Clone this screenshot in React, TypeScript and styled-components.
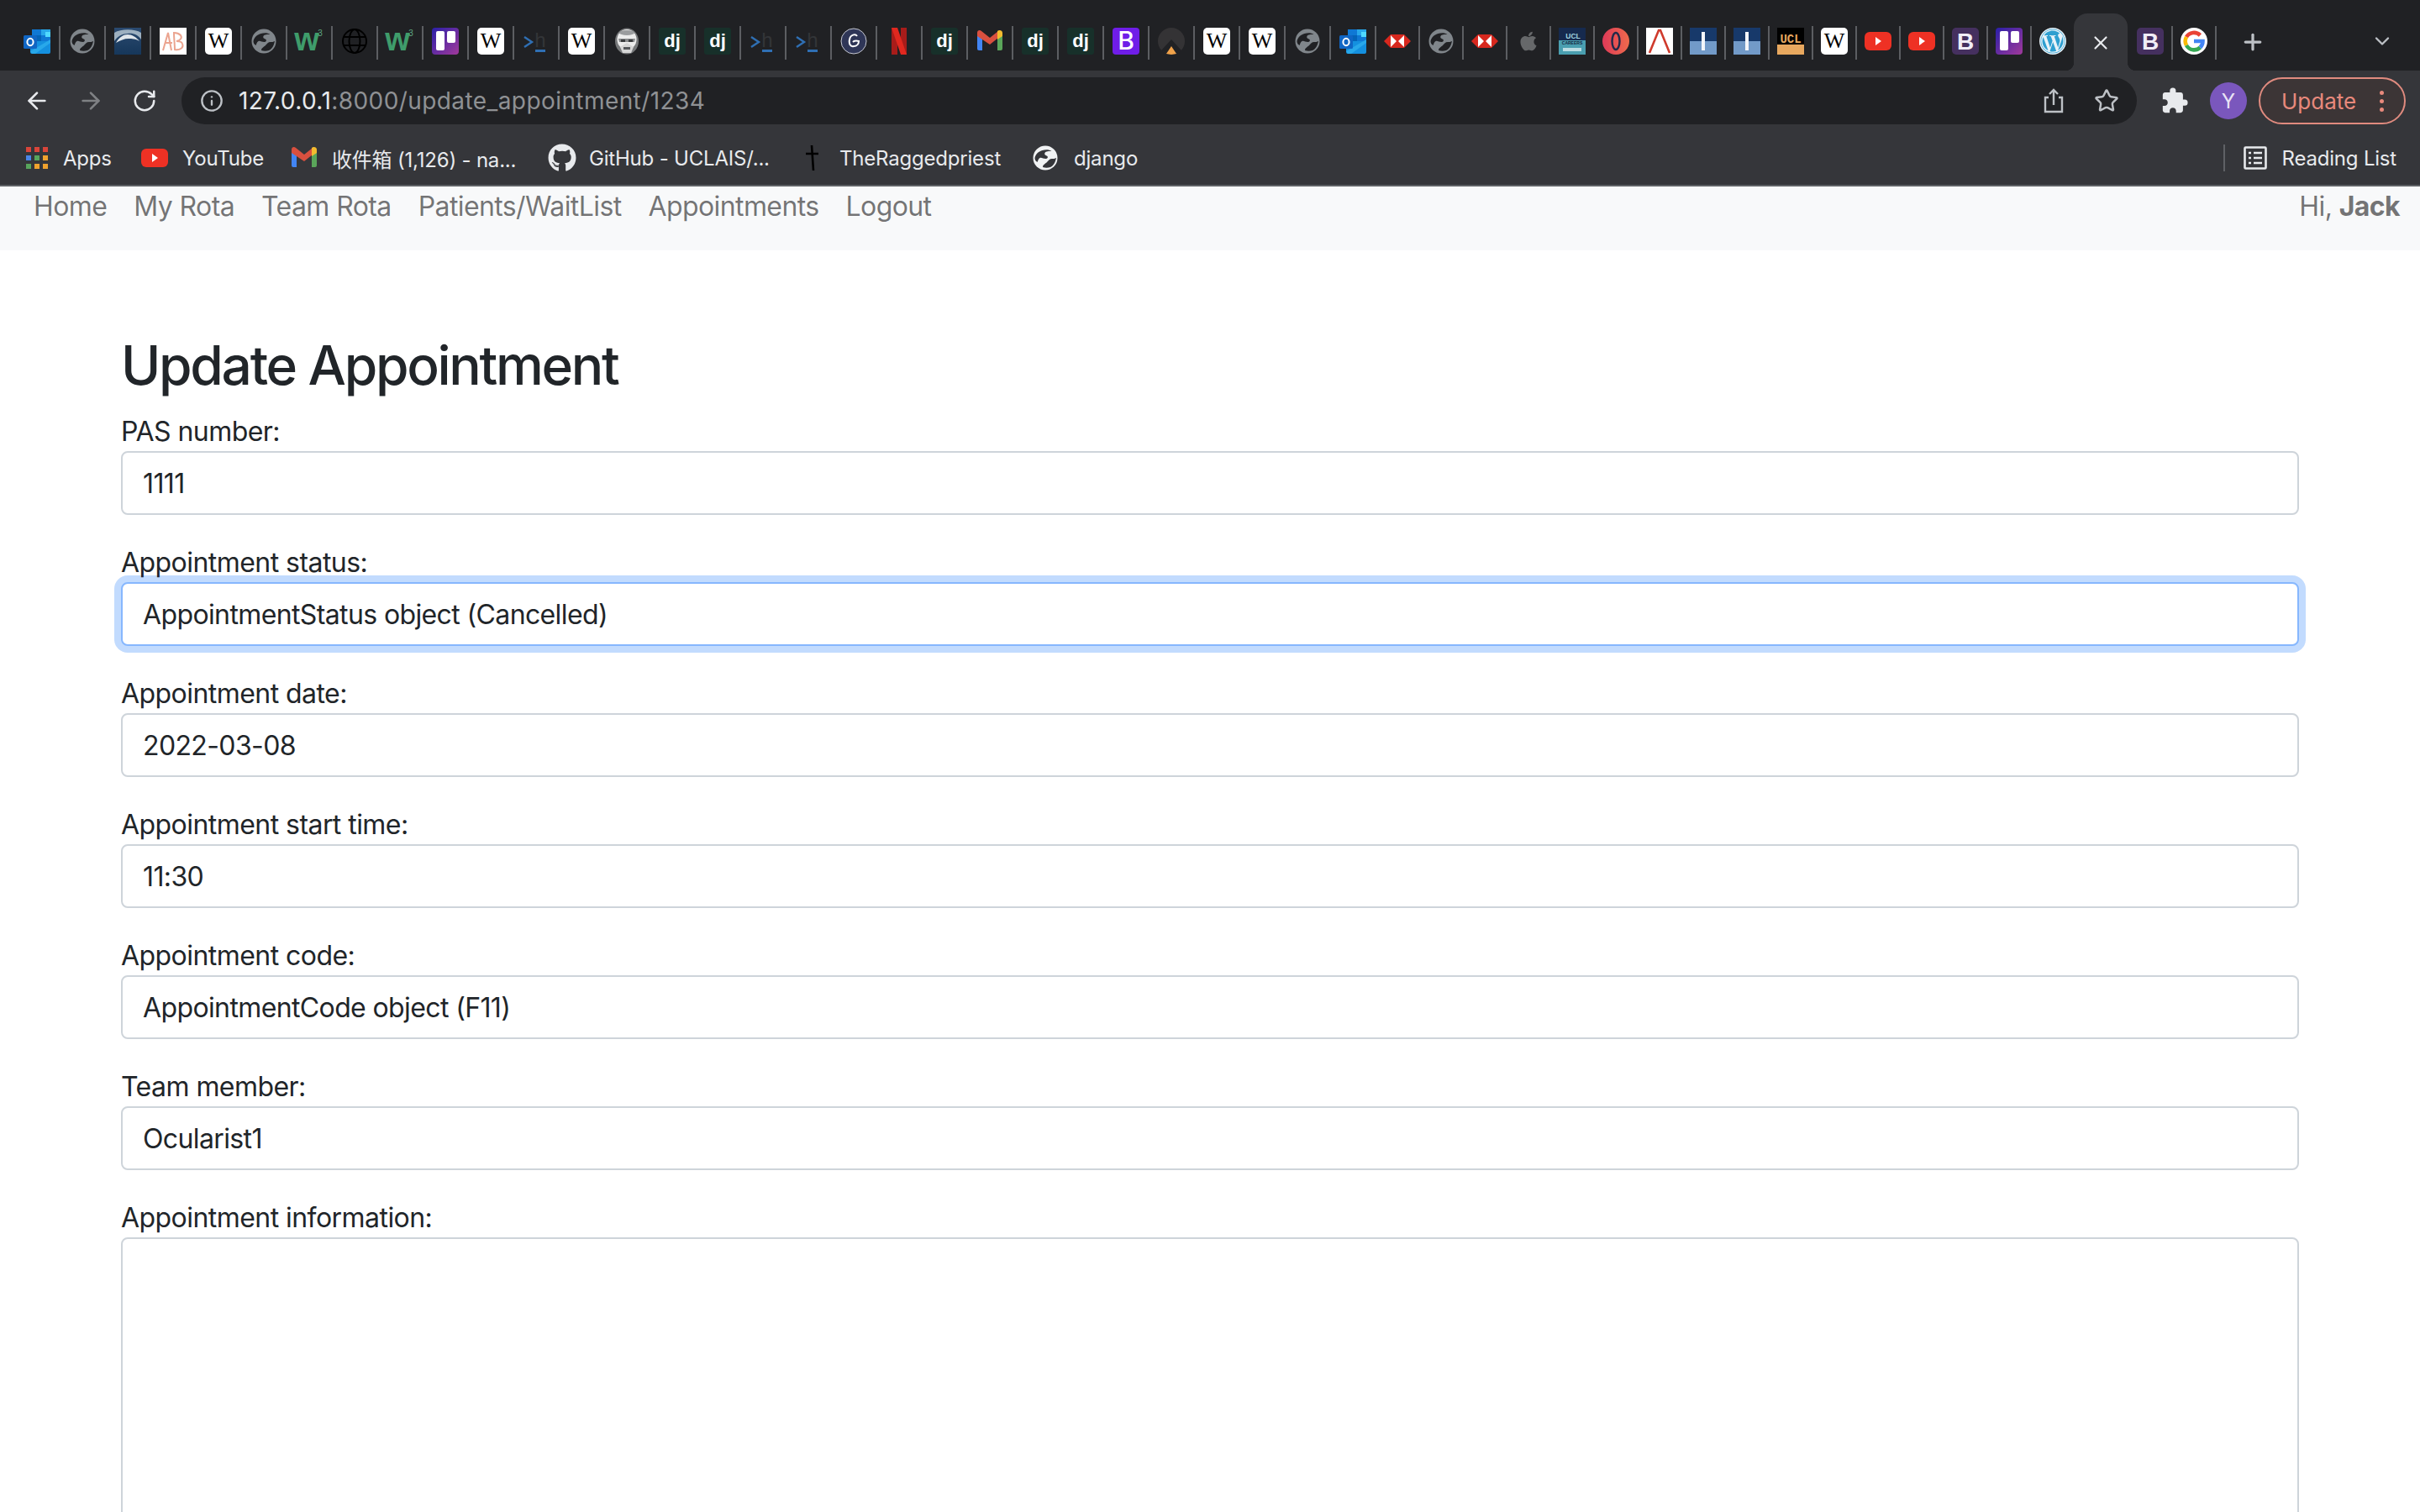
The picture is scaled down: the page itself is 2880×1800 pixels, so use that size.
import React from "react";
import styled, { createGlobalStyle } from "styled-components";
import { ArrowLeft, ArrowRight, ChevronDown, Info, Plus, RotateCw, Star, X } from "lucide-react";
import { FaApple, FaGithub, FaWordpress } from "react-icons/fa";
import { MdExtension } from "react-icons/md";

const GlobalStyle = createGlobalStyle`
	html, body {
		margin: 0;
		height: 100%;
		overflow: hidden;
		background: #fff;
		font-family: Inter, "Noto Sans CJK SC", sans-serif;
	}
`;

/* browser chrome */
const TabStrip = styled.div`
	display: flex;
	align-items: flex-start;
	height: 84px;
	padding: 16px 0 0 18px;
	box-sizing: border-box;
	background: #202124;
`;

const Tab = styled.div<{ $wide?: boolean; $noSep?: boolean }>`
	position: relative;
	flex: none;
	display: flex;
	justify-content: center;
	box-sizing: border-box;
	width: ${(p) => (p.$wide ? 54 : 52)}px;
	height: 68px;
	padding: 17px 2px 0 0;
	&::after {
		content: "";
		display: ${(p) => (p.$noSep ? "none" : "block")};
		position: absolute;
		top: 15px;
		right: 0;
		width: 2px;
		height: 40px;
		background: #5c5e62;
	}
`;

const ActiveTab = styled.div`
	position: relative;
	flex: none;
	display: flex;
	justify-content: center;
	width: 64px;
	height: 68px;
	padding-top: 22px;
	box-sizing: border-box;
	margin-left: -2px;
	margin-right: 2px;
	border-radius: 16px 16px 0 0;
	background: #35363a;
	color: #e8eaed;
	&::before,
	&::after {
		content: "";
		position: absolute;
		bottom: 0;
		width: 10px;
		height: 10px;
	}
	&::before {
		left: -10px;
		background: radial-gradient(circle at 0 0, transparent 10px, #35363a 10.5px);
	}
	&::after {
		right: -10px;
		background: radial-gradient(circle at 100% 0, transparent 10px, #35363a 10.5px);
	}
`;

const StripButton = styled.div<{ $left: number }>`
	flex: none;
	display: flex;
	margin-left: ${(p) => p.$left}px;
	padding-top: 19px;
	color: #bdc1c6;
`;

const Toolbar = styled.div`
	display: flex;
	align-items: center;
	height: 64px;
	padding: 8px 17px 0 12px;
	box-sizing: border-box;
	background: #35363a;
`;

const NavButton = styled.div<{ $off?: boolean }>`
	flex: none;
	display: flex;
	justify-content: center;
	width: 64px;
	color: ${(p) => (p.$off ? "#7f8184" : "#e8eaed")};
`;

const Omnibox = styled.div`
	flex: 1;
	display: flex;
	align-items: center;
	height: 56px;
	margin: 0 13px 0 12px;
	padding: 0 21px 0 22px;
	border-radius: 28px;
	background: #202124;
	color: #bdc1c6;
`;

const UrlText = styled.div`
	flex: 1;
	margin-left: 18px;
	font-size: 28px;
	letter-spacing: 0.42px;
	white-space: nowrap;
	color: #8f9194;
`;

const UrlHost = styled.span`
	color: #e8eaed;
`;

const OmniAction = styled.div`
	display: flex;
	margin-left: 36px;
`;

const Avatar = styled.div`
	flex: none;
	display: flex;
	align-items: center;
	justify-content: center;
	width: 44px;
	height: 44px;
	margin: 0 14px 0 10px;
	border-radius: 50%;
	background: #7a57bd;
	color: #e9e3f5;
	font-size: 24px;
`;

const UpdatePill = styled.div`
	flex: none;
	display: flex;
	align-items: center;
	justify-content: space-between;
	box-sizing: border-box;
	width: 175px;
	height: 56px;
	padding: 0 24px 0 25px;
	border: 2px solid #e08b7f;
	border-radius: 28px;
	background: #3c3536;
	color: #e8897c;
	font-size: 26px;
`;

const MenuDots = styled.div`
	display: flex;
	flex-direction: column;
	gap: 5px;
	& > i {
		width: 5px;
		height: 5px;
		border-radius: 50%;
		background: #e8897c;
	}
`;

const BookmarkBar = styled.div`
	display: flex;
	align-items: center;
	height: 72px;
	padding: 8px 28px 0 31px;
	box-sizing: border-box;
	background: #35363a;
`;

const Bookmark = styled.div<{ $width?: number; $gap?: number }>`
	flex: none;
	display: flex;
	align-items: center;
	gap: ${(p) => p.$gap ?? 18}px;
	width: ${(p) => (p.$width ? `${p.$width}px` : "auto")};
	color: #e8eaed;
	font-size: 24px;
	letter-spacing: -0.2px;
	white-space: nowrap;
`;

const BarDivider = styled.div`
	width: 2px;
	height: 32px;
	margin: 0 22px 0 auto;
	background: #5f6165;
`;

const ChromeEdge = styled.div`
	height: 2px;
	background: #5f6165;
`;

/* page */
const PageNav = styled.nav`
	display: flex;
	align-items: flex-start;
	height: 76px;
	padding: 0 24px;
	box-sizing: border-box;
	background: #f8f9fa;
	color: rgba(0, 0, 0, 0.55);
	font-size: 32px;
	letter-spacing: -0.6px;
	line-height: 48px;
`;

const NavLink = styled.a`
	padding: 0 16px;
	white-space: nowrap;
`;

const Greeting = styled.div`
	margin-left: auto;
	& > b {
		font-weight: 700;
	}
`;

const Container = styled.main`
	padding: 98px 144px 0;
	color: #212529;
`;

const Title = styled.h2`
	margin: 0 0 16px;
	font-size: 64px;
	font-weight: 500;
	letter-spacing: -2.3px;
	line-height: 77px;
`;

const Field = styled.div`
	margin-bottom: 32px;
`;

const Label = styled.label`
	display: block;
	padding-top: 2px;
	font-size: 32px;
	letter-spacing: -0.55px;
	line-height: 46px;
`;

const TextInput = styled.input<{ $focused?: boolean }>`
	display: block;
	box-sizing: border-box;
	width: 100%;
	height: 76px;
	padding: 12px 24px;
	border: 2px solid ${(p) => (p.$focused ? "#86b7fe" : "#ced4da")};
	border-radius: 8px;
	outline: 0;
	background: #fff;
	box-shadow: ${(p) => (p.$focused ? "0 0 0 8px rgba(13, 110, 253, 0.25)" : "none")};
	color: #212529;
	font: inherit;
	font-size: 32px;
	letter-spacing: -0.62px;
`;

const TextArea = styled.textarea`
	display: block;
	box-sizing: border-box;
	width: 100%;
	height: 420px;
	border: 2px solid #ced4da;
	border-radius: 8px;
	outline: 0;
	resize: none;
`;

const FaviconBox = styled.svg`
	flex: none;
	overflow: visible;
`;

const word = (x: number, y: number, size: number, fill: string, text: string, family = "Liberation Sans", weight = 700) => (
  <text x={x} y={y} fontSize={size} fill={fill} fontFamily={family} fontWeight={weight} textAnchor="middle">
    {text}
  </text>
);

const globeArt = (disc: string, cut: string) => (
  <>
    <circle cx="16" cy="16" r="14.5" fill={disc} />
    <path d="M3.5 16c1-5 5-8 9-9 4-1 8-1 11 1-3 0-7 0-8 2-1 2 1 3 3 4 1 1 0 3-2 3-3 0-5-2-7-1-2 1-2 3-3 5-2-1-3-3-3-5z" fill={cut} />
    <path d="M13 27c0-3 3-4 5-6s3-4 6-4c2 0 3 0 5-1-1 5-3 9-7 11-3 1-6 1-9 0z" fill={cut} />
  </>
);

const favicons: Record<string, React.ReactNode> = {
  outlook: (
    <>
      <rect x="10" y="2" width="22" height="14" fill="#0f78d4" />
      <rect x="21" y="2" width="11" height="7" fill="#28a8ea" />
      <rect x="26" y="5" width="6" height="6" fill="#50d9ff" />
      <rect x="10" y="9" width="11" height="7" fill="#0364b8" />
      <path d="M8 16h24v13a2 2 0 0 1-2 2H10a2 2 0 0 1-2-2z" fill="#1490df" />
      <path d="M8 28l24-14v4L14 31H10z" fill="#28a8ea" />
      <rect x="0" y="9" width="16" height="16" rx="1.5" fill="#1066c4" />
      <ellipse cx="8" cy="17" rx="3.6" ry="4.2" fill="none" stroke="#fff" strokeWidth="2" />
    </>
  ),
  globe: globeArt("#80868b", "#202124"),
  globeWhite: globeArt("#f1f3f4", "#35363a"),
  photo: (
    <>
      <defs>
        <linearGradient id="photoSky" x1="0" y1="0" x2="0" y2="1">
          <stop offset="0" stopColor="#2b4a70" />
          <stop offset="1" stopColor="#16375a" />
        </linearGradient>
      </defs>
      <rect width="32" height="32" fill="url(#photoSky)" />
      <path d="M0 6c8-5 24-5 32 0v8C28 8 22 6 16 7 10 7 4 10 0 16z" fill="#9db0c0" />
      <path d="M2 18c4-7 9-10 14-10s10 3 14 8c-5-3-9-3-13-3-5 0-10 2-15 5z" fill="#dfe5ea" />
    </>
  ),
  ab: (
    <>
      <rect width="32" height="32" fill="#fff" />
      <path d="M4 27L10 6l4 21M6 18h9" fill="none" stroke="#eba48f" strokeWidth="2" />
      <path d="M17 6c0 7 1 14 1 20 6 1 11-2 9-7-1-3-4-3-7-3 5-1 7-4 5-7-2-2-5-3-8-3z" fill="none" stroke="#eba48f" strokeWidth="2" />
    </>
  ),
  wiki: (
    <>
      <rect width="32" height="32" rx="5" fill="#fff" />
      {word(16, 24, 26, "#000", "W", "Liberation Serif", 400)}
    </>
  ),
  w3: (
    <>
      {word(13, 27, 38, "#3f9c6b", "w")}
      {word(29, 10, 10, "#5fa883", "3", "Liberation Sans", 400)}
    </>
  ),
  webBlack: (
    <g fill="none" stroke="#000" strokeWidth="2">
      <circle cx="16" cy="16" r="14" />
      <ellipse cx="16" cy="16" rx="6.5" ry="14" />
      <path d="M3 11h26M3 21h26" />
    </g>
  ),
  trello: (
    <>
      <defs>
        <linearGradient id="trelloBg" x1="0" y1="0" x2="1" y2="1">
          <stop offset="0" stopColor="#2a1fa8" />
          <stop offset="1" stopColor="#a1399b" />
        </linearGradient>
      </defs>
      <rect width="32" height="32" rx="4" fill="url(#trelloBg)" />
      <rect x="5" y="4" width="10" height="23" rx="2" fill="#fff" />
      <rect x="18" y="4" width="10" height="14" rx="2" fill="#fff" />
    </>
  ),
  shell: (
    <>
      <path d="M2 11l9 6-9 6" fill="none" stroke="#2f6fb4" strokeWidth="2.4" />
      {word(21, 23, 24, "#333538", "h", "Liberation Sans", 400)}
      <rect x="15" y="26" width="12" height="3" fill="#2f6fb4" />
    </>
  ),
  trooper: (
    <>
      <ellipse cx="16" cy="16" rx="14" ry="15.5" fill="#77797b" />
      <ellipse cx="16" cy="14" rx="11.5" ry="12" fill="#ececec" />
      <ellipse cx="16" cy="6" rx="9" ry="3" fill="#9a9c9e" />
      <path d="M6 13h20l-1 4H7z" fill="#8a8c8e" />
      <path d="M9 14h5v3H9zM18 14h5v3h-5z" fill="#3a3c3e" />
      <path d="M8 23l8-5 8 5-3 7H11z" fill="#d6d6d6" />
      <path d="M12 23h8v3h-8z" fill="#55575a" />
    </>
  ),
  dj: (
    <>
      <rect width="32" height="32" rx="3" fill="#17302a" />
      {word(16, 23, 22, "#fff", "dj")}
    </>
  ),
  grammar: (
    <>
      <circle cx="16" cy="16" r="15" fill="#2f3657" stroke="#c7c9d2" strokeWidth="1" />
      <path d="M20 10c-2-3-8-2-9 4-1 5 1 9 5 8 4 0 6-3 6-6-3-1-6 0-7 1" fill="none" stroke="#fff" strokeWidth="2" />
    </>
  ),
  netflix: (
    <>
      <path d="M7 0h7v32l-7 0z" fill="#a81c1a" />
      <path d="M18 0h7v32h-7z" fill="#a81c1a" />
      <path d="M7 0h7l11 32h-7z" fill="#e0281f" />
    </>
  ),
  gmail: (
    <>
      <path d="M1 8v17a2 2 0 0 0 2 2h4V12z" fill="#4285f4" />
      <path d="M31 8v17a2 2 0 0 1-2 2h-4V12z" fill="#5aa65a" />
      <path d="M1 6c0-3 3-4 5-2l10 8 10-8v8l-10 8L1 10z" fill="#d9503f" />
      <path d="M25 4c2-2 6-1 6 2v4l-6 4z" fill="#f3bb2f" />
    </>
  ),
  bootstrap: (
    <>
      <rect width="32" height="32" rx="4" fill="#6f1de8" />
      {word(16, 26, 30, "#fff", "B", "Inter", 500)}
    </>
  ),
  cone: (
    <>
      <circle cx="16" cy="16" r="16" fill="#343335" />
      <path d="M4 27L16 14l12 13-4 3H8z" fill="#202124" />
      <path d="M16 22l6 9-6 1-6-1z" fill="#f0a24a" />
    </>
  ),
  hsbc: (
    <>
      <path d="M0 16l8-8h16l8 8-8 8H8z" fill="#d7281e" />
      <path d="M8 9l7 7-7 7zM24 9l-7 7 7 7z" fill="#fff" />
    </>
  ),
  apple: <FaApple size={26} x={3} y={3} color="#66686a" />,
  careers: (
    <>
      <rect width="32" height="32" fill="#4a9fb0" />
      <rect width="32" height="15" fill="#162a4e" />
      {word(17, 13, 8.5, "#9fd3df", "UCL")}
      {word(16, 20, 5, "#12263f", "CAREERS")}
      <rect x="5" y="24" width="22" height="4" fill="#bcdde3" />
    </>
  ),
  opera: (
    <>
      <defs>
        <linearGradient id="operaBg" x1="0" y1="0" x2="1" y2="0">
          <stop offset="0" stopColor="#de3a58" />
          <stop offset="1" stopColor="#ee6a4c" />
        </linearGradient>
      </defs>
      <circle cx="16" cy="16" r="16" fill="url(#operaBg)" />
      <ellipse cx="16" cy="16" rx="4.5" ry="10" fill="none" stroke="#202a4a" strokeWidth="2.4" />
    </>
  ),
  lambda: (
    <>
      <rect width="32" height="32" fill="#fff" />
      <path d="M4 30L15 3h2l11 27" fill="none" stroke="#cf3a2c" strokeWidth="2.6" />
    </>
  ),
  blueBar: (
    <>
      <rect width="32" height="32" fill="#729ac8" />
      <rect width="32" height="16" fill="#17396a" />
      <rect x="14" y="5" width="4" height="22" fill="#f4f6fa" />
    </>
  ),
  uclBlack: (
    <>
      <rect width="32" height="32" fill="#e8a85f" />
      <rect width="32" height="20" fill="#000" />
      {word(16, 18, 14, "#e8a85f", "UCL", "Liberation Mono")}
    </>
  ),
  youtube: (
    <>
      <rect y="5" width="32" height="22" rx="6" fill="#ee3124" />
      <path d="M13 11l7 5-7 5z" fill="#fff" />
    </>
  ),
  bootDark: (
    <>
      <rect width="32" height="32" rx="5" fill="#45305f" />
      {word(16, 26, 28, "#f1edf6", "B")}
    </>
  ),
  wordpress: (
    <>
      <circle cx="16" cy="16" r="16" fill="#e7f2f8" />
      <FaWordpress size={30} x={1} y={1} color="#2e9fd0" />
    </>
  ),
  google: (
    <>
      <circle cx="16" cy="16" r="16" fill="#fff" />
      <g fill="none" strokeWidth="4.6">
        <path d="M23.4 9A10.5 10.5 0 0 0 7 11" stroke="#ea4335" />
        <path d="M7 11a10.5 10.5 0 0 0 0 10" stroke="#fbbc05" />
        <path d="M7 21a10.5 10.5 0 0 0 16.4 2.5" stroke="#34a853" />
        <path d="M23.4 23.5A10.5 10.5 0 0 0 26.5 16H16" stroke="#4285f4" />
      </g>
    </>
  ),
};

const Favicon: React.FC<{ kind: string; size?: number }> = ({ kind, size = 32 }) => (
  <FaviconBox width={size} height={size} viewBox="0 0 32 32">
    {favicons[kind]}
  </FaviconBox>
);

const wideTabs = [
  "outlook", "globe", "photo", "ab", "wiki", "globe", "w3", "webBlack", "w3", "trello",
  "wiki", "shell", "wiki", "trooper", "dj", "dj", "shell", "shell", "grammar", "netflix",
  "dj", "gmail", "dj", "dj", "bootstrap", "cone", "wiki", "wiki", "globe", "outlook",
];

const narrowTabs = [
  "hsbc", "globe", "hsbc", "apple", "careers", "opera", "lambda", "blueBar", "blueBar",
  "uclBlack", "wiki", "youtube", "youtube", "bootDark", "trello", "wordpress",
];

const navLinks = ["Home", "My Rota", "Team Rota", "Patients/WaitList", "Appointments", "Logout"];

const fields = [
  { label: "PAS number:", value: "1111" },
  { label: "Appointment status:", value: "AppointmentStatus object (Cancelled)", focused: true },
  { label: "Appointment date:", value: "2022-03-08" },
  { label: "Appointment start time:", value: "11:30" },
  { label: "Appointment code:", value: "AppointmentCode object (F11)" },
  { label: "Team member:", value: "Ocularist1" },
];

const AppsGrid = () => {
  const colors = ["#d9453a", "#d9453a", "#d9453a", "#4a86e8", "#58a55c", "#f0a22e", "#58a55c", "#f0a22e", "#f0a22e"];
  return (
    <svg width="26" height="26" viewBox="0 0 26 26">
      {colors.map((c, i) => (
        <rect key={i} x={(i % 3) * 10} y={Math.floor(i / 3) * 10} width="6" height="6" fill={c} />
      ))}
    </svg>
  );
};

const ShareIcon = () => (
  <svg width="24" height="30" viewBox="0 0 24 30" fill="none" stroke="#bdc1c6" strokeWidth="2.4">
    <path d="M6 11H2v17h20V11h-4" />
    <path d="M12 20V2M7 7l5-5 5 5" />
  </svg>
);

const ReadingListIcon = () => (
  <svg width="28" height="28" viewBox="0 0 28 28" fill="none" stroke="#e8eaed" strokeWidth="2.6">
    <rect x="1.5" y="1.5" width="25" height="25" rx="1" />
    <path d="M6 8h3M12 8h10M6 14h3M12 14h10M6 20h3M12 20h10" />
  </svg>
);

const TieCross = () => (
  <svg width="24" height="32" viewBox="0 0 24 32" fill="none" stroke="#000" strokeWidth="2.6">
    <path d="M11 1l2 30M4 11h15" />
  </svg>
);

const App: React.FC = () => {
  return (
    <>
      <GlobalStyle />
      <TabStrip>
        {wideTabs.map((kind, i) => (
          <Tab key={i} $wide>
            <Favicon kind={kind} />
          </Tab>
        ))}
        {narrowTabs.map((kind, i) => (
          <Tab key={i} $noSep={i === narrowTabs.length - 1}>
            <Favicon kind={kind} />
          </Tab>
        ))}
        <ActiveTab>
          <X size={26} />
        </ActiveTab>
        <Tab>
          <Favicon kind="bootDark" />
        </Tab>
        <Tab>
          <Favicon kind="google" />
        </Tab>
        <StripButton $left={28}>
          <Plus size={30} strokeWidth={2.6} />
        </StripButton>
        <StripButton $left={125}>
          <ChevronDown size={28} />
        </StripButton>
      </TabStrip>

      <Toolbar>
        <NavButton>
          <ArrowLeft size={32} />
        </NavButton>
        <NavButton $off>
          <ArrowRight size={32} />
        </NavButton>
        <NavButton>
          <RotateCw size={30} />
        </NavButton>
        <Omnibox>
          <Info size={28} />
          <UrlText>
            <UrlHost>127.0.0.1</UrlHost>:8000/update_appointment/1234
          </UrlText>
          <ShareIcon />
          <OmniAction>
            <Star size={30} />
          </OmniAction>
        </Omnibox>
        <NavButton>
          <MdExtension size={34} />
        </NavButton>
        <Avatar>Y</Avatar>
        <UpdatePill>
          Update
          <MenuDots>
            <i />
            <i />
            <i />
          </MenuDots>
        </UpdatePill>
      </Toolbar>

      <BookmarkBar>
        <Bookmark $width={137}>
          <AppsGrid />
          Apps
        </Bookmark>
        <Bookmark $width={178} $gap={17}>
          <Favicon kind="youtube" />
          YouTube
        </Bookmark>
        <Bookmark $width={306} $gap={17}>
          <Favicon kind="gmail" />
          收件箱 (1,126) - na...
        </Bookmark>
        <Bookmark $width={303} $gap={15}>
          <FaGithub size={34} />
          GitHub - UCLAIS/...
        </Bookmark>
        <Bookmark $width={273} $gap={20}>
          <TieCross />
          TheRaggedpriest
        </Bookmark>
        <Bookmark>
          <Favicon kind="globeWhite" />
          django
        </Bookmark>
        <BarDivider />
        <Bookmark>
          <ReadingListIcon />
          Reading List
        </Bookmark>
      </BookmarkBar>
      <ChromeEdge />

      <PageNav>
        {navLinks.map((link) => (
          <NavLink key={link}>{link}</NavLink>
        ))}
        <Greeting>
          Hi, <b>Jack</b>
        </Greeting>
      </PageNav>

      <Container>
        <Title>Update Appointment</Title>
        {fields.map((f) => (
          <Field key={f.label}>
            <Label>{f.label}</Label>
            <TextInput readOnly value={f.value} $focused={f.focused} />
          </Field>
        ))}
        <Field>
          <Label>Appointment information:</Label>
          <TextArea readOnly />
        </Field>
      </Container>
    </>
  );
};

export default App;
